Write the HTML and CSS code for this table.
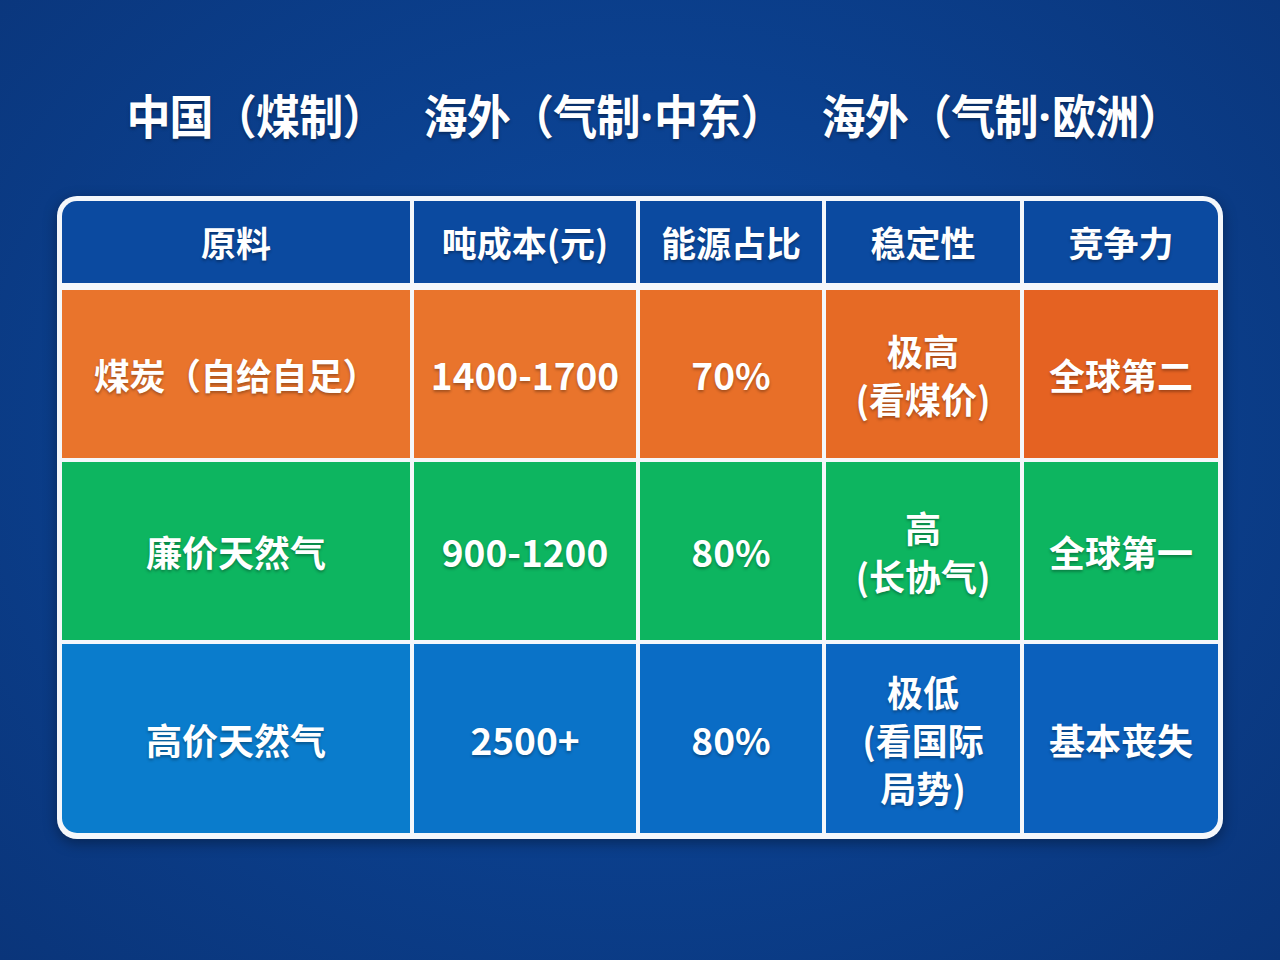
FILE: index.html
```html
<!DOCTYPE html>
<html lang="zh-CN">
<head>
<meta charset="utf-8">
<title>对比</title>
<link rel="stylesheet" href="styles.css">
</head>
<body>
<div class="page">
  <div class="titles">
    <span class="t">中国（煤制）</span>
    <span class="t">海外（气制<span class="dot">·</span>中东）</span>
    <span class="t">海外（气制<span class="dot">·</span>欧洲）</span>
  </div>
  <div class="table">
    <div class="cell head">原料</div>
    <div class="cell head">吨成本(元)</div>
    <div class="cell head">能源占比</div>
    <div class="cell head">稳定性</div>
    <div class="cell head">竞争力</div>

    <div class="cell orange c1">煤炭（自给自足）</div>
    <div class="cell orange c2 num">1400-1700</div>
    <div class="cell orange c3 num">70%</div>
    <div class="cell orange c4">极高<br>(看煤价)</div>
    <div class="cell orange c5">全球第二</div>

    <div class="cell green">廉价天然气</div>
    <div class="cell green num">900-1200</div>
    <div class="cell green num">80%</div>
    <div class="cell green">高<br>(长协气)</div>
    <div class="cell green">全球第一</div>

    <div class="cell blue b1 bl">高价天然气</div>
    <div class="cell blue b2 num">2500+</div>
    <div class="cell blue b3 num">80%</div>
    <div class="cell blue b4">极低<br>(看国际<br>局势)</div>
    <div class="cell blue b5 br">基本丧失</div>
  </div>
</div>
</body>
</html>
```
FILE: styles.css
```css
html, body {
  margin: 0;
  padding: 0;
}
body {
  width: 1280px;
  height: 960px;
  overflow: hidden;
  background: radial-gradient(ellipse at 50% 45%, #0d4aa0 0%, #0b4190 45%, #0a357a 100%);
  font-family: "Noto Sans CJK SC", "Noto Sans", sans-serif;
  color: #fff;
}
.page {
  display: flex;
  flex-direction: column;
  align-items: center;
  padding-top: 84px;
}
.titles {
  display: flex;
  gap: 38px;
  height: 60px;
  align-items: center;
  margin-left: 28px;
}
.t {
  font-size: 44px;
  font-weight: 700;
  letter-spacing: -0.8px;
  text-shadow: 0 2px 3px rgba(0,0,0,0.35);
  transform: scaleY(1.06);
  display: inline-block;
}
.dot {
  font-family: "Noto Sans", sans-serif;
  letter-spacing: 0;
  margin: 0 1px;
}
.table {
  margin-top: 52px;
  display: grid;
  grid-template-columns: 348px 222px 182px 194px 194px;
  grid-template-rows: 85px 168px 178px 189px;
  column-gap: 4px;
  row-gap: 4px;
  padding: 5px 5px 6px 5px;
  background: #f4f7fb;
  border-radius: 20px;
  box-shadow: 0 4px 14px rgba(0,0,0,0.35);
}
.cell {
  display: flex;
  align-items: center;
  justify-content: center;
  text-align: center;
  font-size: 36px;
  font-weight: 700;
  line-height: 48px;
  text-shadow: 0 2px 3px rgba(0,0,0,0.3);
}
.num {
  font-size: 37px;
}
.head {
  background: #0b4aa0;
  font-size: 35px;
  margin-bottom: 3px;
}
.head:first-child {
  border-top-left-radius: 15px;
}
.head:nth-child(5) {
  border-top-right-radius: 15px;
}
.c1 { letter-spacing: -0.5px; }
.orange { background: #e9742c; }
.orange.c3 { background: #e86f28; }
.orange.c4 { background: #e66a25; }
.orange.c5 { background: #e56222; }
.green { background: #0db560; }
.blue { background: #0a7ccc; }
.blue.b2 { background: #0a73c8; }
.blue.b3 { background: #0a6cc5; }
.blue.b4 { background: #0b66c1; }
.blue.b5 { background: #0b60bc; }
.bl { border-bottom-left-radius: 15px; }
.br { border-bottom-right-radius: 15px; }
```
